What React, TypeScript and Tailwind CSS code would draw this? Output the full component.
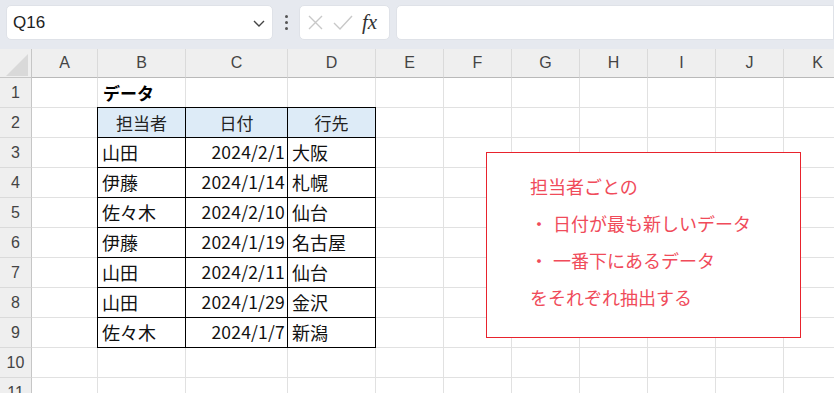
import React from "react";

const cols = ["A", "B", "C", "D", "E", "F", "G", "H", "I", "J", "K"];
const widths = [66, 88, 102, 88, 68, 68, 68, 68, 68, 68, 68];

const data: [string, string, string][] = [
  ["山田", "2024/2/1", "大阪"],
  ["伊藤", "2024/1/14", "札幌"],
  ["佐々木", "2024/2/10", "仙台"],
  ["伊藤", "2024/1/19", "名古屋"],
  ["山田", "2024/2/11", "仙台"],
  ["山田", "2024/1/29", "金沢"],
  ["佐々木", "2024/1/7", "新潟"],
];

const font = { fontFamily: '"Noto Sans CJK JP", "Noto Sans", sans-serif' };

function cellContent(r: number, c: number) {
  // r: 1-based row, c: 0-based column (A=0)
  if (r === 1 && c === 1) return <span className="pl-[5px] font-bold text-[17px] text-black">データ</span>;
  if (r === 2 && c >= 1 && c <= 3) {
    const t = ["担当者", "日付", "行先"][c - 1];
    return <span className="w-full text-center text-[17px] text-[#222]">{t}</span>;
  }
  if (r >= 3 && r <= 9 && c >= 1 && c <= 3) {
    const row = data[r - 3];
    if (c === 2) return <span className="w-full text-right pr-[2px] text-[17.5px] tracking-[0.2px] text-[#111]">{row[1]}</span>;
    return <span className="pl-[4px] text-[18px] text-[#111]">{row[c === 1 ? 0 : 2]}</span>;
  }
  return null;
}

export default function App() {
  const rows = Array.from({ length: 11 }, (_, i) => i + 1);
  return (
    <div className="relative w-[834px] h-[393px] overflow-hidden bg-white" style={font}>
      {/* toolbar */}
      <div className="h-[49px] bg-[#e6e9ef] flex items-center gap-[6px] pl-[6px] pb-[4px]">
        <div className="w-[267px] h-[35px] bg-white rounded-[5px] border border-[#dfe2e8] flex items-center justify-between pl-[6px] pr-[6px]">
          <span className="text-[17px] text-[#222]" style={{ fontFamily: '"Liberation Sans", sans-serif' }}>Q16</span>
          <svg width="14" height="10" viewBox="0 0 14 10"><path d="M2 3 L7 8 L12 3" fill="none" stroke="#444" strokeWidth="1.4" /></svg>
        </div>
        <div className="w-[14px] flex flex-col items-center gap-[3px]">
          <span className="w-[3px] h-[3px] bg-[#555] rounded-full" />
          <span className="w-[3px] h-[3px] bg-[#555] rounded-full" />
          <span className="w-[3px] h-[3px] bg-[#555] rounded-full" />
        </div>
        <div className="w-[91px] h-[35px] bg-white rounded-[5px] border border-[#dfe2e8] flex items-center gap-[9px] pl-[7px]">
          <svg width="17" height="17" viewBox="0 0 17 17"><path d="M2 2 L15 15 M15 2 L2 15" stroke="#c8c8c8" strokeWidth="1.4" /></svg>
          <svg width="20" height="17" viewBox="0 0 20 17"><path d="M1 9 L7 15 L19 2" fill="none" stroke="#c8c8c8" strokeWidth="1.4" /></svg>
          <span className="text-[21px] italic text-[#333] leading-none" style={{ fontFamily: '"Liberation Serif", serif' }}>fx</span>
        </div>
        <div className="flex-1 h-[35px] bg-white rounded-l-[5px] border border-[#dfe2e8]" />
      </div>

      {/* grid */}
      <div
        className="grid"
        style={{ gridTemplateColumns: `32px ${widths.map((w) => w + "px").join(" ")}`, gridTemplateRows: `29px repeat(11, 30px)` }}
      >
        <div className="bg-[#efefef] border-r border-b border-[#c6c6c6] relative">
          <svg className="absolute left-[6px] top-[5px]" width="22" height="22" viewBox="0 0 22 22"><path d="M22 0 L22 22 L0 22 Z" fill="#d9d9d9" /></svg>
        </div>
        {cols.map((c) => (
          <div key={c} className="bg-[#efefef] border-b border-[#b9b9b9] border-r border-r-[#dadada] flex items-center justify-center text-[16px] text-[#444]" style={{ fontFamily: '"Liberation Sans", sans-serif' }}>
            {c}
          </div>
        ))}
        {rows.map((r) => (
          <React.Fragment key={r}>
            <div className="bg-[#efefef] border-r border-[#c6c6c6] border-b border-b-[#dadada] flex items-center justify-center text-[16px] text-[#444]" style={{ fontFamily: '"Liberation Sans", sans-serif' }}>
              {r}
            </div>
            {cols.map((_, c) => {
              const inTable = r >= 2 && r <= 9 && c >= 1 && c <= 3;
              return (
                <div
                  key={c}
                  className={
                    "flex items-center whitespace-nowrap overflow-hidden " +
                    (inTable
                      ? "border-r border-b border-black " + (c === 1 ? "border-l border-l-black -ml-px " : "") + (r === 2 ? "border-t border-t-black -mt-px bg-[#ddebf7] " : "")
                      : "border-r border-b border-[#e1e1e1]")
                  }
                >
                  {cellContent(r, c)}
                </div>
              );
            })}
          </React.Fragment>
        ))}
      </div>

      {/* text box */}
      <div className="absolute left-[486px] top-[152px] w-[315px] h-[186px] bg-white border border-[#e8232d] pl-[43px] pt-[15px] text-[#f04b5a] text-[18px] leading-[37px]">
        <div>担当者ごとの</div>
        <div>・<span className="ml-[5px]">日付が最も新しいデータ</span></div>
        <div>・<span className="ml-[5px]">一番下にあるデータ</span></div>
        <div>をそれぞれ抽出する</div>
      </div>
    </div>
  );
}
